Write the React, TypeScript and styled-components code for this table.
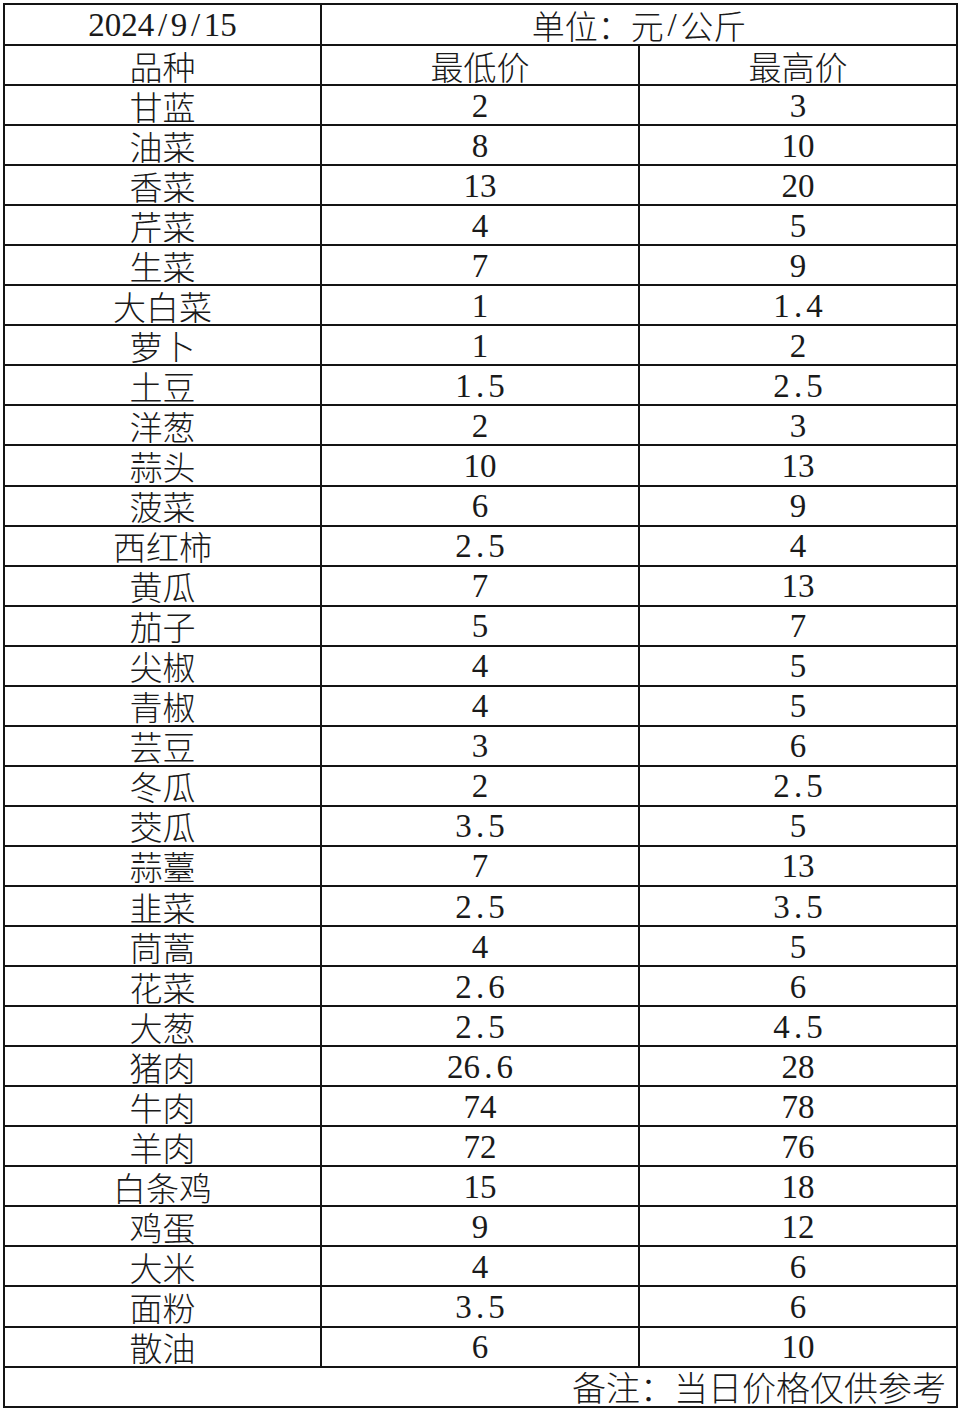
import React from "react";
import styled, { createGlobalStyle } from "styled-components";

const Global = createGlobalStyle`
  html, body { margin: 0; padding: 0; background: #fff; }
  body { width: 960px; height: 1412px; overflow: hidden; }
`;

const Sheet = styled.div`
  margin: 3px 0 0 3px;
  width: 955px;
  box-sizing: border-box;
  display: grid;
  grid-template-columns: 315px 316px 316px;
  grid-template-rows: 39px repeat(33, 38.06px) 38px;
  gap: 2px;
  padding: 2px;
  background: #141414;
  font-family: "Liberation Serif", "Noto Sans CJK SC", serif;
  font-weight: 300;
  color: #1a1a1a;
`;

const Cell = styled.div<{ $span?: number; $note?: boolean }>`
  background: #fff;
  grid-column: span ${(p) => p.$span ?? 1};
  box-sizing: border-box;
  display: flex;
  align-items: center;
  justify-content: ${(p) => (p.$note ? "flex-end" : "center")};
  padding: 1px ${(p) => (p.$note ? "10px" : "0")} 0 0;
  font-size: ${(p) => (p.$note ? "34px" : "33px")};
  line-height: 32px;
  white-space: nowrap;
`;

const Half = styled.span`
  display: inline-block;
  width: 0.5em;
  height: 32px;
  text-align: center;
  font-family: "Liberation Serif", serif;
  font-weight: 400;
  line-height: 32px;
`;

const Wide = styled.span`
  display: inline-block;
  height: 32px;
  font-family: "Noto Sans CJK SC", sans-serif;
  font-weight: 300;
  line-height: 32px;
`;

function Txt({ s }: { s: string }) {
  return (
    <>
      {Array.from(s).map((c, i) =>
        c.charCodeAt(0) < 128 ? <Half key={i}>{c}</Half> : <Wide key={i}>{c}</Wide>
      )}
    </>
  );
}

const rows: [string, string, string][] = [
  ["甘蓝", "2", "3"],
  ["油菜", "8", "10"],
  ["香菜", "13", "20"],
  ["芹菜", "4", "5"],
  ["生菜", "7", "9"],
  ["大白菜", "1", "1.4"],
  ["萝卜", "1", "2"],
  ["土豆", "1.5", "2.5"],
  ["洋葱", "2", "3"],
  ["蒜头", "10", "13"],
  ["菠菜", "6", "9"],
  ["西红柿", "2.5", "4"],
  ["黄瓜", "7", "13"],
  ["茄子", "5", "7"],
  ["尖椒", "4", "5"],
  ["青椒", "4", "5"],
  ["芸豆", "3", "6"],
  ["冬瓜", "2", "2.5"],
  ["茭瓜", "3.5", "5"],
  ["蒜薹", "7", "13"],
  ["韭菜", "2.5", "3.5"],
  ["茼蒿", "4", "5"],
  ["花菜", "2.6", "6"],
  ["大葱", "2.5", "4.5"],
  ["猪肉", "26.6", "28"],
  ["牛肉", "74", "78"],
  ["羊肉", "72", "76"],
  ["白条鸡", "15", "18"],
  ["鸡蛋", "9", "12"],
  ["大米", "4", "6"],
  ["面粉", "3.5", "6"],
  ["散油", "6", "10"],
];

export default function App() {
  return (
    <>
      <Global />
      <Sheet>
        <Cell><Txt s="2024/9/15" /></Cell>
        <Cell $span={2}><Txt s="单位：元/公斤" /></Cell>
        <Cell><Txt s="品种" /></Cell>
        <Cell><Txt s="最低价" /></Cell>
        <Cell><Txt s="最高价" /></Cell>
        {rows.map(([n, lo, hi]) => (
          <React.Fragment key={n}>
            <Cell><Txt s={n} /></Cell>
            <Cell><Txt s={lo} /></Cell>
            <Cell><Txt s={hi} /></Cell>
          </React.Fragment>
        ))}
        <Cell $span={3} $note><Txt s="备注：当日价格仅供参考" /></Cell>
      </Sheet>
    </>
  );
}
